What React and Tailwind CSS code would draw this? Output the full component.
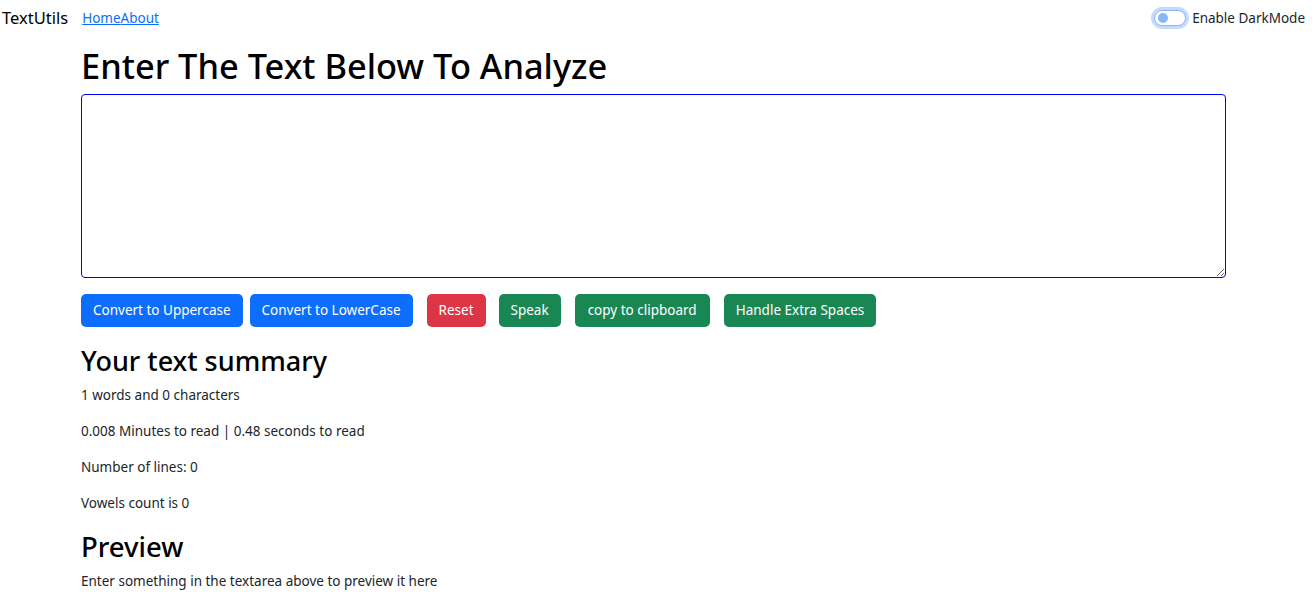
export default function App() {
  return (
    <div className="min-h-[592px] bg-white text-[#212529]" style={{ fontFamily: '"Noto Sans", "Open Sans", sans-serif' }}>
      {/* Navbar */}
      <nav className="flex items-center justify-between h-[36px] pl-[2px] pr-[11px]">
        <div className="flex items-center">
          <span className="text-[16.5px] text-black mr-[14px]">TextUtils</span>
          <a href="#" className="text-[13.5px] text-[#0d6efd] underline">Home</a>
          <a href="#" className="text-[13.5px] text-[#0d6efd] underline">About</a>
        </div>
        <label className="flex items-center gap-[6px] text-[13.5px] text-[#212529]">
          <span className="relative w-[32px] h-[16px] rounded-full border border-[#86b7fe] bg-white shadow-[0_0_0_3px_rgba(13,110,253,0.25)]">
            <span className="absolute left-[3px] top-[2px] w-[10px] h-[10px] rounded-full bg-[#86b7fe]" />
          </span>
          Enable DarkMode
        </label>
      </nav>

      <main className="ml-[81px] w-[1145px]">
        <h1 className="text-[34.4px] font-medium leading-[48px] mt-[6px] mb-[4px] text-black">Enter The Text Below To Analyze</h1>
        <textarea className="block w-full h-[184px] rounded-[4px] border border-[#0000ff] outline-none resize-y" />

        <div className="flex items-center mt-[16px]">
          <button className="h-[33px] px-[12px] rounded-[5px] bg-[#0d6efd] text-white text-[13.5px] mr-[7px]">Convert to Uppercase</button>
          <button className="h-[33px] px-[12px] rounded-[5px] bg-[#0d6efd] text-white text-[13.5px] mr-[14px]">Convert to LowerCase</button>
          <button className="h-[33px] px-[12px] rounded-[5px] bg-[#dc3545] text-white text-[13.5px] mr-[13px]">Reset</button>
          <button className="h-[33px] px-[12px] rounded-[5px] bg-[#198754] text-white text-[13.5px] mr-[14px]">Speak</button>
          <button className="h-[33px] px-[13px] rounded-[5px] bg-[#198754] text-white text-[13.5px] mr-[14px]">copy to clipboard</button>
          <button className="h-[33px] px-[12px] rounded-[5px] bg-[#198754] text-white text-[13.5px]">Handle Extra Spaces</button>
        </div>

        <h2 className="text-[27px] font-medium leading-[36px] mt-[16px] mb-[6px] text-black">Your text summary</h2>
        <p className="text-[13.5px] leading-[20px] mb-[16px]">1 words and 0 characters</p>
        <p className="text-[13.5px] leading-[20px] mb-[16px]">0.008 Minutes to read | 0.48 seconds to read</p>
        <p className="text-[13.5px] leading-[20px] mb-[16px]">Number of lines: 0</p>
        <p className="text-[13.5px] leading-[20px] mb-[16px]">Vowels count is 0</p>

        <h2 className="text-[27.5px] font-medium leading-[36px] mb-[6px] text-black">Preview</h2>
        <p className="text-[13.5px] leading-[20px]">Enter something in the textarea above to preview it here</p>
      </main>
    </div>
  );
}
